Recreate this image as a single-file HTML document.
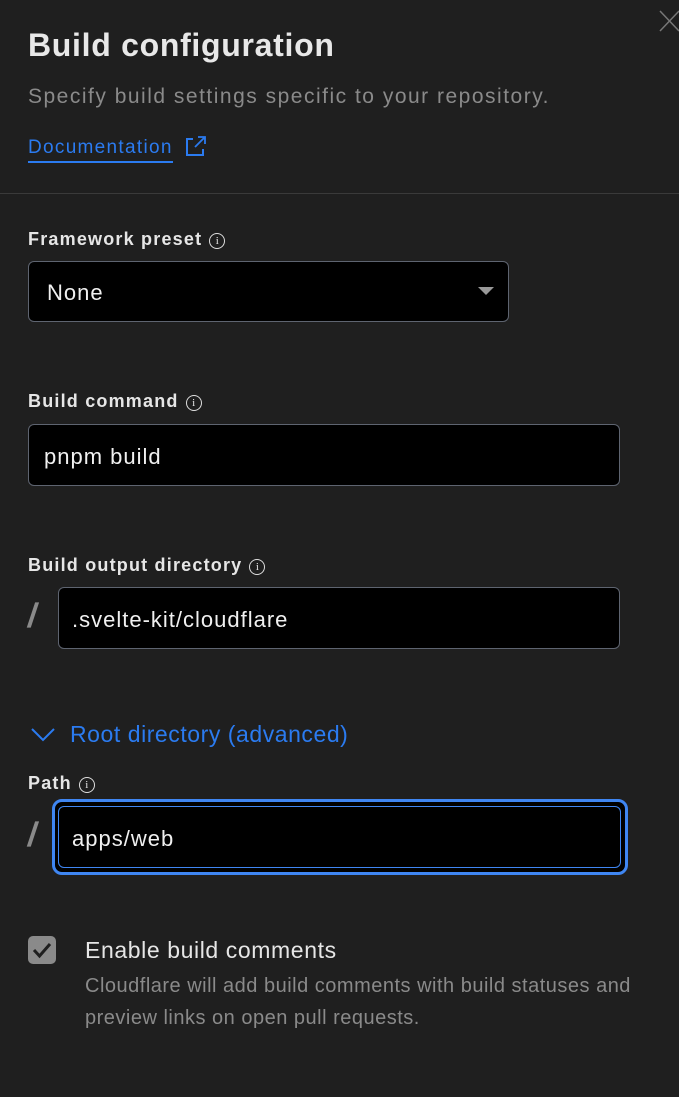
<!DOCTYPE html>
<html><head><meta charset="utf-8"><style>
*{margin:0;padding:0;box-sizing:border-box}
html,body{width:679px;height:1097px;background:#1f1f1f;overflow:hidden;font-family:"Liberation Sans",sans-serif;color:#e6e6e6}
.a{position:absolute;white-space:nowrap}
.lbl{font-size:18px;font-weight:bold;color:#e6e6e6;letter-spacing:1.2px}
.info{display:inline-block;width:16px;height:16px;border:1.3px solid #ddd;border-radius:50%;font-size:11px;font-weight:normal;text-align:center;line-height:14px;font-family:"Liberation Serif",serif;vertical-align:1px;margin-left:7px;letter-spacing:0}
.box{position:absolute;background:#000;border:1px solid #5e6470;border-radius:6px}
.val{position:absolute;font-size:22px;color:#f0f0f0;letter-spacing:1px}
.sl{position:absolute;font-size:34px;color:#8a8a8a;font-weight:bold;transform:skewX(-8deg)}
</style></head><body>
<svg class="a" style="left:658px;top:9px" width="22" height="24"><path d="M2 2L21 22M21 2L2 22" stroke="#777" stroke-width="1.5"/></svg>
<div class="a" style="left:28px;top:27px;font-size:32px;font-weight:bold;color:#e8e8e8;letter-spacing:0.7px">Build configuration</div>
<div class="a" style="left:28px;top:85px;font-size:21px;color:#8a8a8a;letter-spacing:1.5px">Specify build settings specific to your repository.</div>
<div class="a" style="left:28px;top:137px;font-size:19px;color:#2b7bf0;letter-spacing:1.3px;border-bottom:2px solid #2b7bf0;padding-bottom:2px">Documentation</div>
<svg class="a" style="left:184px;top:135px" width="22" height="22"><path d="M9 4H3v16h16v-6" fill="none" stroke="#2b7bf0" stroke-width="2"/><path d="M11 12L20 3M14 2h7v7" fill="none" stroke="#2b7bf0" stroke-width="1.8"/></svg>
<div class="a" style="left:0;top:193px;width:679px;height:1px;background:#3a3a3a"></div>

<div class="a lbl" style="left:28px;top:229px">Framework preset<span class="info">i</span></div>
<div class="box" style="left:28px;top:261px;width:481px;height:61px"></div>
<div class="val" style="left:47px;top:280px">None</div>
<svg class="a" style="left:478px;top:287px" width="16" height="9"><path d="M0 0H16L8 8Z" fill="#999"/></svg>

<div class="a lbl" style="left:28px;top:391px">Build command<span class="info">i</span></div>
<div class="box" style="left:28px;top:424px;width:592px;height:62px"></div>
<div class="val" style="left:44px;top:444px">pnpm build</div>

<div class="a lbl" style="left:28px;top:555px">Build output directory<span class="info">i</span></div>
<div class="sl" style="left:28px;top:597px">/</div>
<div class="box" style="left:58px;top:587px;width:562px;height:62px"></div>
<div class="val" style="left:72px;top:607px">.svelte-kit/cloudflare</div>

<svg class="a" style="left:30px;top:727px" width="26" height="16"><path d="M2 2L13 13L24 2" fill="none" stroke="#2b7bf0" stroke-width="2"/></svg>
<div class="a" style="left:70px;top:721px;font-size:23px;color:#2b7bf0;letter-spacing:0.55px">Root directory (advanced)</div>

<div class="a lbl" style="left:28px;top:773px">Path<span class="info">i</span></div>
<div class="sl" style="left:28px;top:816px">/</div>
<div class="a" style="left:52px;top:799px;width:576px;height:76px;border:3px solid #3f86f2;border-radius:10px;background:#000"></div>
<div class="box" style="left:58px;top:806px;width:563px;height:62px;border-color:#3f86f2"></div>
<div class="val" style="left:72px;top:826px">apps/web</div>

<div class="a" style="left:28px;top:936px;width:28px;height:28px;background:#8a8a8a;border-radius:5px"></div>
<svg class="a" style="left:28px;top:936px" width="28" height="28"><path d="M6 14L11.5 20L22 8" fill="none" stroke="#1f1f1f" stroke-width="3"/></svg>
<div class="a" style="left:85px;top:937px;font-size:23px;color:#e6e6e6;letter-spacing:0.6px">Enable build comments</div>
<div class="a" style="left:85px;top:970px;font-size:20px;color:#8a8a8a;line-height:32px;letter-spacing:0.5px">Cloudflare will add build comments with build statuses and<br>preview links on open pull requests.</div>
</body></html>
